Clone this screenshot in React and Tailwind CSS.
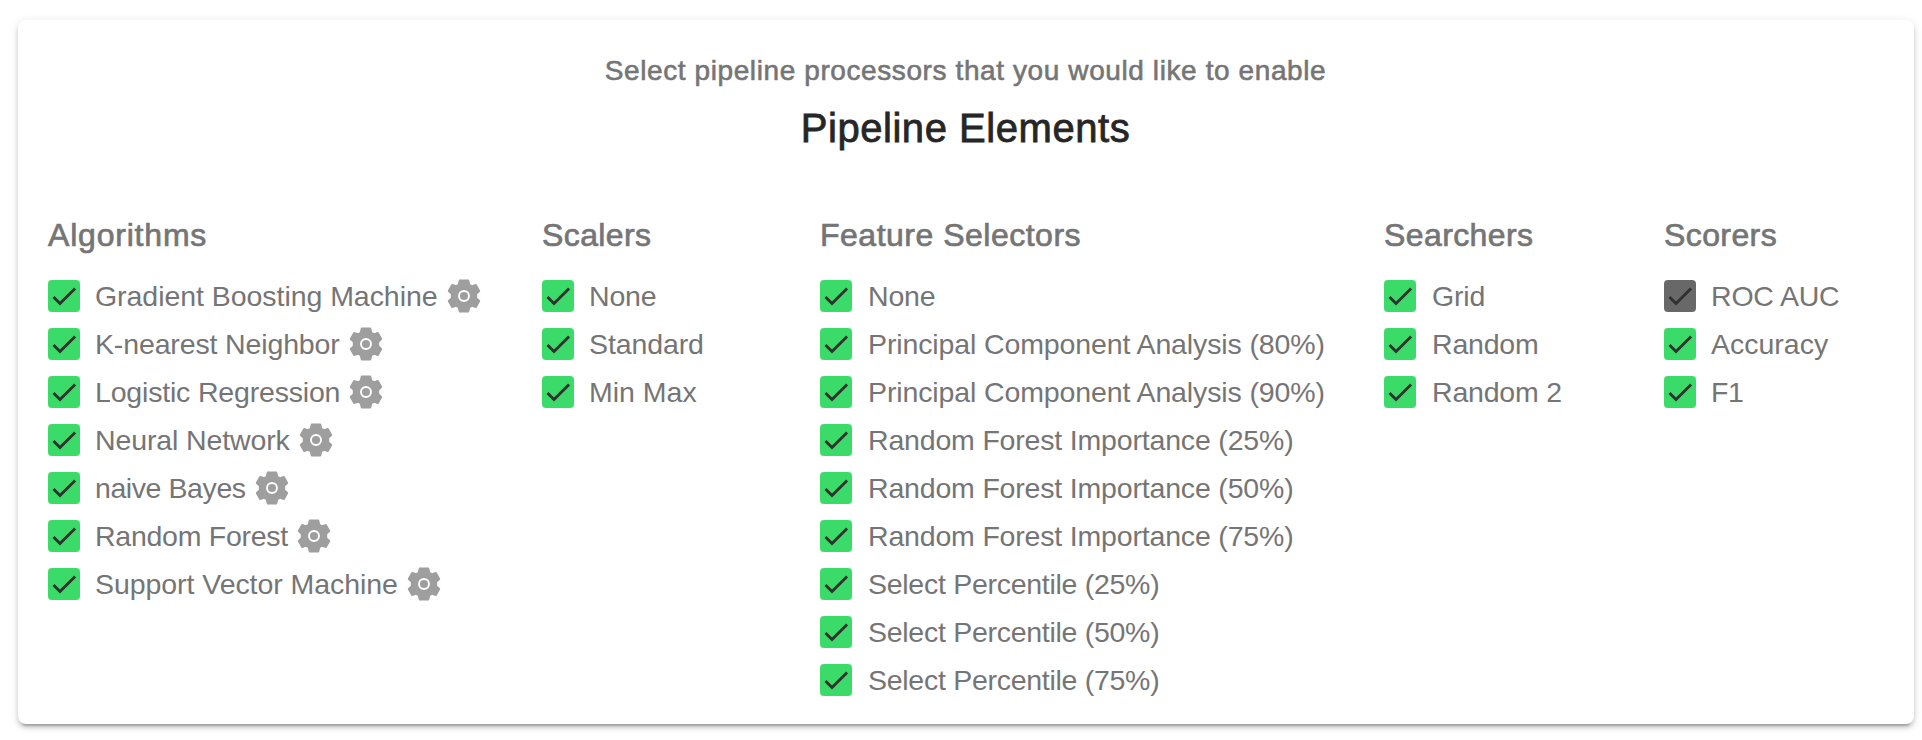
import React from 'react';

const columns = [
  {
    title: 'Algorithms',
    width: 'w-[494px]',
    tracking: 'tracking-[0.8px]',
    gap: 'gap-[15px]',
    gear: true,
    items: [
      ['Gradient Boosting Machine', 'tracking-[-0.05px]'],
      ['K-nearest Neighbor', 'tracking-[-0.14px]'],
      ['Logistic Regression', 'tracking-[-0.18px]'],
      ['Neural Network', 'tracking-[-0.12px]'],
      ['naive Bayes', 'tracking-[-0.42px]'],
      ['Random Forest', 'tracking-[-0.27px]'],
      ['Support Vector Machine', 'tracking-[-0.06px]'],
    ],
  },
  {
    title: 'Scalers',
    width: 'w-[278px]',
    tracking: 'tracking-[0.4px]',
    gap: 'gap-[15px]',
    items: [
      ['None', 'tracking-[-0.2px]'],
      ['Standard', 'tracking-[-0.1px]'],
      ['Min Max', 'tracking-normal'],
    ],
  },
  {
    title: 'Feature Selectors',
    width: 'w-[564px]',
    tracking: 'tracking-[0.5px]',
    gap: 'gap-4',
    items: [
      ['None', 'tracking-[-0.2px]'],
      ['Principal Component Analysis (80%)', 'tracking-[-0.12px]'],
      ['Principal Component Analysis (90%)', 'tracking-[-0.12px]'],
      ['Random Forest Importance (25%)', 'tracking-[-0.18px]'],
      ['Random Forest Importance (50%)', 'tracking-[-0.18px]'],
      ['Random Forest Importance (75%)', 'tracking-[-0.18px]'],
      ['Select Percentile (25%)', 'tracking-[-0.28px]'],
      ['Select Percentile (50%)', 'tracking-[-0.28px]'],
      ['Select Percentile (75%)', 'tracking-[-0.28px]'],
    ],
  },
  {
    title: 'Searchers',
    width: 'w-[280px]',
    tracking: 'tracking-[0.4px]',
    gap: 'gap-4',
    items: [
      ['Grid', 'tracking-[-0.2px]'],
      ['Random', 'tracking-[-0.2px]'],
      ['Random 2', 'tracking-[-0.2px]'],
    ],
  },
  {
    title: 'Scorers',
    width: 'w-[220px]',
    tracking: 'tracking-[0.4px]',
    gap: 'gap-[15px]',
    locked: 'ROC AUC',
    items: [
      ['ROC AUC', 'tracking-[-0.2px]'],
      ['Accuracy', 'tracking-normal'],
      ['F1', 'tracking-[-0.5px]'],
    ],
  },
];

function Checkbox({ disabled }) {
  return (
    <span className={`size-8 shrink-0 rounded-[4px] ${disabled ? 'bg-[#686868]' : 'bg-[#3bdb69]'}`}>
      <svg viewBox="0 0 24 24" className="size-8" fill="none" stroke="#303030" strokeWidth="2.13">
        <path d="M4.1 12.7 9 17.6 20.3 6.3" />
      </svg>
    </span>
  );
}

function Gear() {
  return (
    <svg viewBox="0 0 34 34" className="-ml-[6px] size-[34px] shrink-0">
      <path
        fill="#9e9e9e"
        d="M12.8.5h8.4q.9 0 1.1.9l.8 3.6 2 1.2 3.4-1.2q.8-.2 1.2.5l3.4 6q.4.8-.2 1.3l-2.7 2.4v3.6l2.7 2.4q.6.6.2 1.3l-3.4 6q-.4.7-1.2.5l-3.4-1.2-2 1.2-.8 3.6q-.2.9-1.1.9h-8.4q-.9 0-1.1-.9l-.8-3.6-2-1.2-3.4 1.2q-.8.2-1.2-.5l-3.4-6q-.4-.7.2-1.3l2.7-2.4v-3.6l-2.7-2.4q-.6-.5-.2-1.3l3.4-6q.4-.7 1.2-.5l3.4 1.2 2-1.2.8-3.6q.2-.9 1.1-.9Z"
      />
      <circle cx="17" cy="17" r="5" fill="none" stroke="#fff" strokeWidth="1.9" />
    </svg>
  );
}

export default function App() {
  return (
    <div className="h-[740px] w-[1922px] bg-white pt-5 pl-[18px] font-['Liberation_Sans',Arial,sans-serif] text-[#757575]">
      <main className="flex h-[704px] w-[1896px] flex-col rounded-[8px] bg-white shadow-[0_6px_2px_-4px_rgba(0,0,0,0.2),0_4px_4px_0_rgba(0,0,0,0.14),0_2px_10px_0_rgba(0,0,0,0.12)]">
        <header className="flex flex-col items-center pt-[31px] pr-px">
          <p className="text-[28px] leading-[40px] tracking-[0.6px] whitespace-nowrap [-webkit-text-stroke:0.6px]">Select pipeline processors that you would like to enable</p>
          <h1 className="mt-[13px] text-[40px] leading-[48px] tracking-[0.55px] whitespace-nowrap text-[#262626] [-webkit-text-stroke:0.8px]">Pipeline Elements</h1>
        </header>
        <div className="flex pt-[63px] pl-[29px]">
          {columns.map((c) => (
            <section key={c.title} className={`shrink-0 pl-px ${c.width}`}>
              <h2 className={`text-[32px] leading-[40px] whitespace-nowrap [-webkit-text-stroke:0.7px] ${c.tracking}`}>{c.title}</h2>
              <ul className="mt-[17px]">
                {c.items.map(([item, tracking]) => (
                  <li key={item} className={`flex h-12 items-center ${c.gap}`}>
                    <Checkbox disabled={c.locked === item} />
                    <span className={`text-[28.5px] leading-[32px] whitespace-nowrap ${tracking}`}>{item}</span>
                    {c.gear && <Gear />}
                  </li>
                ))}
              </ul>
            </section>
          ))}
        </div>
      </main>
    </div>
  );
}
